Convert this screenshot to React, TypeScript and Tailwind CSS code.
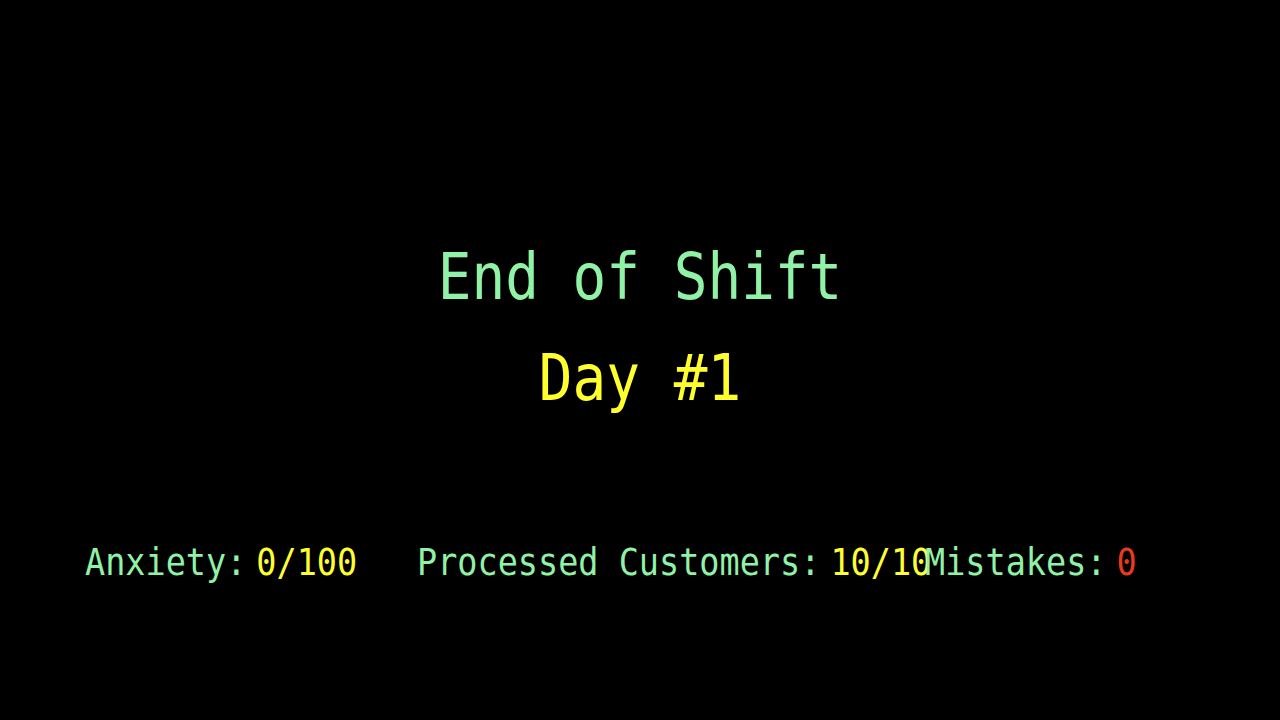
const mono = { fontFamily: '"DejaVu Sans Mono", "Liberation Mono", monospace' };

function Stat({ label, value, valueClass, width }: { label: string; value: string; valueClass: string; width: string }) {
  return (
    <div className={`flex shrink-0 items-start gap-[10px] whitespace-nowrap ${width}`}>
      <span className="text-[#8ff2a6]">{label}</span>
      <span className={valueClass}>{value}</span>
    </div>
  );
}

export default function App() {
  return (
    <div className="flex h-[720px] w-full flex-col bg-black" style={mono}>
      <div className="flex flex-col items-center pt-[250px]">
        <h1 className="origin-center scale-y-[1.13] text-[56px] leading-none font-normal text-[#8ff2a6]">End of Shift</h1>
        <h2 className="mt-[45px] origin-center scale-y-[1.13] text-[56px] leading-none font-normal text-[#ffff2e]">Day #1</h2>
      </div>
      <div className="mt-[139px] flex origin-center scale-y-[1.13] pl-[85px] text-[33.5px] leading-none">
        <Stat label="Anxiety:" value="0/100" valueClass="text-[#ffff2e]" width="w-[332px]" />
        <Stat label="Processed Customers:" value="10/10" valueClass="text-[#ffff2e]" width="w-[508px]" />
        <Stat label="Mistakes:" value="0" valueClass="text-[#e83a1c]" width="w-auto" />
      </div>
    </div>
  );
}
